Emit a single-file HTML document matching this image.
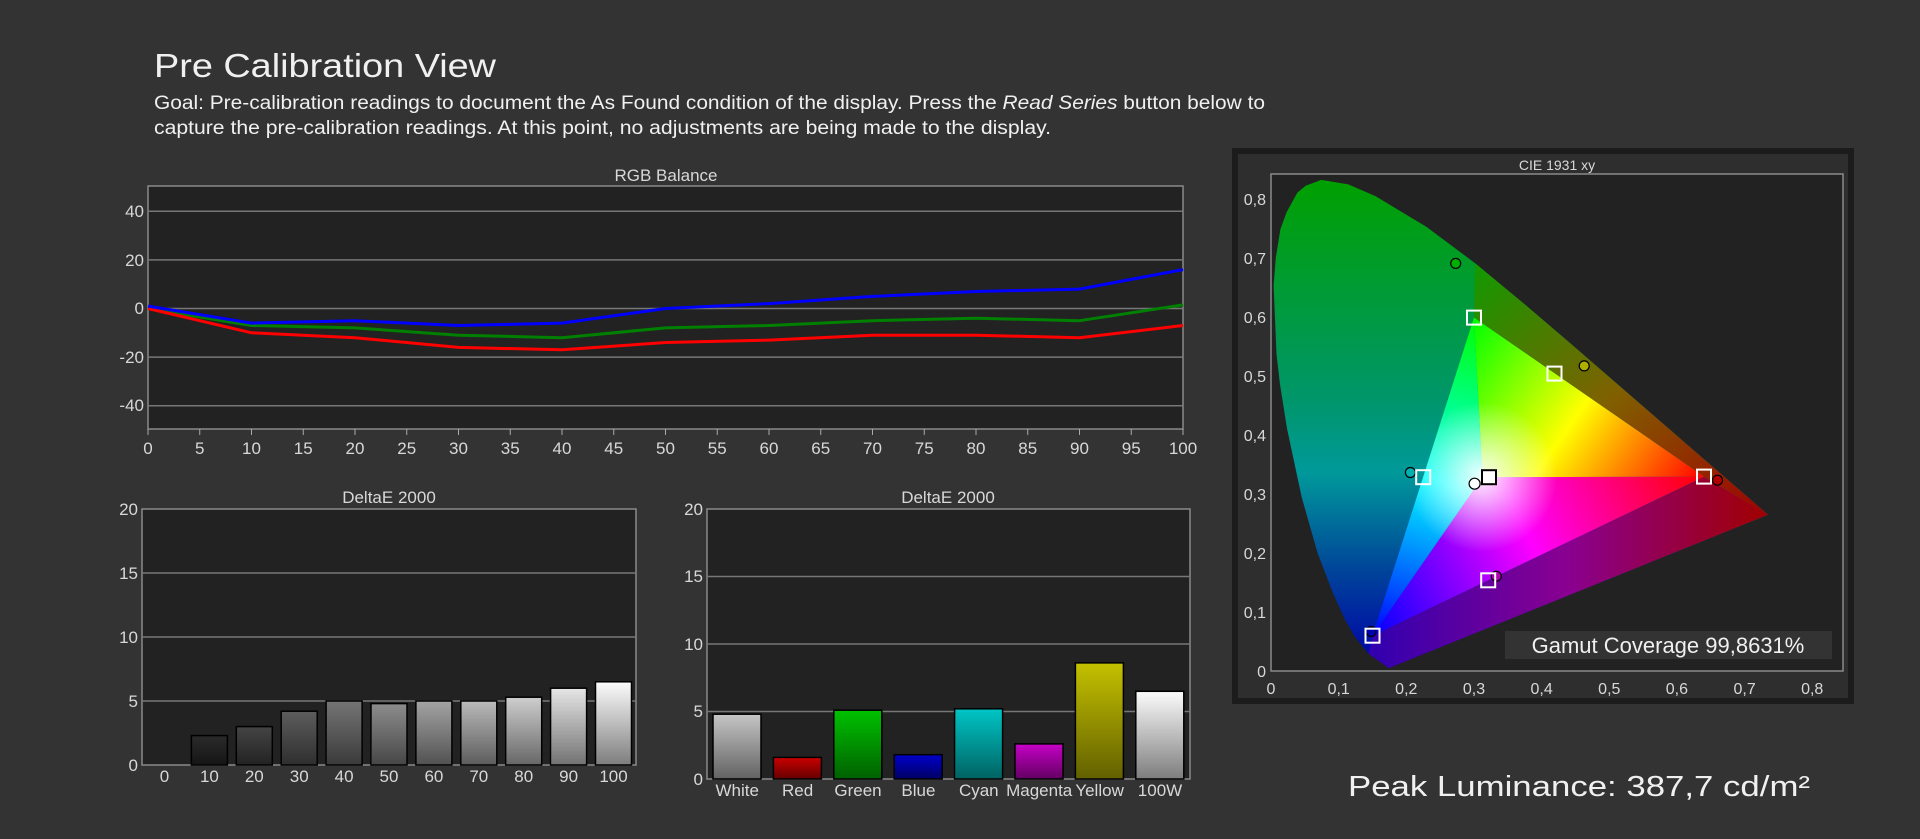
<!DOCTYPE html>
<html><head><meta charset="utf-8"><style>
html,body{margin:0;padding:0;background:#333;width:1920px;height:839px;overflow:hidden}
svg{display:block}
.n{font-family:"Liberation Sans Narrow","Liberation Sans",sans-serif;fill:#d8d8d8;font-size:17px}
.s{font-family:"Liberation Sans","DejaVu Sans",sans-serif}
</style></head><body>
<svg width="1920" height="839" viewBox="0 0 1920 839" xmlns="http://www.w3.org/2000/svg">
<defs>
<linearGradient id="loc" x1="0" y1="0" x2="0" y2="1">
<stop offset="0" stop-color="#00a000"/><stop offset="0.45" stop-color="#00966a"/><stop offset="0.6" stop-color="#00999a"/><stop offset="0.8" stop-color="#004499"/><stop offset="1" stop-color="#0000aa"/></linearGradient>
<linearGradient id="bot" x1="0" y1="0" x2="1" y2="0"><stop offset="0" stop-color="#3000b0"/><stop offset="0.5" stop-color="#8a0090"/><stop offset="1" stop-color="#a00000"/></linearGradient>
<linearGradient id="top" x1="0" y1="0" x2="1" y2="1"><stop offset="0" stop-color="#109a00"/><stop offset="0.5" stop-color="#806000"/><stop offset="1" stop-color="#a00000"/></linearGradient>
<linearGradient id="rg" gradientUnits="userSpaceOnUse" x1="1704" y1="477" x2="1474" y2="318"><stop offset="0" stop-color="#ff0000"/><stop offset="0.5" stop-color="#ffff00"/><stop offset="1" stop-color="#00ff00"/></linearGradient>
<linearGradient id="gb" gradientUnits="userSpaceOnUse" x1="1474" y1="318" x2="1372" y2="636"><stop offset="0" stop-color="#00ff00"/><stop offset="0.5" stop-color="#00ffff"/><stop offset="1" stop-color="#0000ff"/></linearGradient>
<linearGradient id="br" gradientUnits="userSpaceOnUse" x1="1372" y1="636" x2="1704" y2="477"><stop offset="0" stop-color="#0000ff"/><stop offset="0.5" stop-color="#ff00ff"/><stop offset="1" stop-color="#ff0000"/></linearGradient>
<radialGradient id="wh" gradientUnits="userSpaceOnUse" cx="1482" cy="477" r="75"><stop offset="0" stop-color="#fff" stop-opacity="0.95"/><stop offset="1" stop-color="#fff" stop-opacity="0"/></radialGradient>
<linearGradient id="g0" x1="0" y1="0" x2="0" y2="1"><stop offset="0" stop-color="#000" stop-opacity="0"/><stop offset="1" stop-color="#000" stop-opacity="0.5"/></linearGradient>
</defs>

<text x="154" y="77" class="s" font-size="33" fill="#f0f0f0" textLength="342" lengthAdjust="spacingAndGlyphs">Pre Calibration View</text>
<text x="154" y="109" class="s" font-size="19" fill="#f0f0f0" textLength="1111" lengthAdjust="spacingAndGlyphs">Goal: Pre-calibration readings to document the As Found condition of the display. Press the <tspan font-style="italic">Read Series</tspan> button below to</text>
<text x="154" y="134" class="s" font-size="19" fill="#f0f0f0" textLength="897" lengthAdjust="spacingAndGlyphs">capture the pre-calibration readings. At this point, no adjustments are being made to the display.</text>

<!-- RGB balance -->
<text x="666" y="181" class="n" text-anchor="middle" font-size="16">RGB Balance</text>
<rect x="148" y="186" width="1035" height="243" fill="#222" stroke="#8a8a8a" stroke-width="1.5"/>
<g stroke="#777" stroke-width="1.5">
<line x1="148" y1="211.3" x2="1183" y2="211.3"/><line x1="148" y1="259.9" x2="1183" y2="259.9"/><line x1="148" y1="308.5" x2="1183" y2="308.5"/><line x1="148" y1="357.1" x2="1183" y2="357.1"/><line x1="148" y1="405.7" x2="1183" y2="405.7"/>
</g>
<g class="n" text-anchor="end">
<text x="144" y="217">40</text><text x="144" y="266">20</text><text x="144" y="314">0</text><text x="144" y="363">-20</text><text x="144" y="411">-40</text></g>
<g stroke="#aaa" stroke-width="1">
<line x1="148" y1="429" x2="148" y2="435"/><line x1="199.75" y1="429" x2="199.75" y2="435"/><line x1="251.5" y1="429" x2="251.5" y2="435"/><line x1="303.25" y1="429" x2="303.25" y2="435"/><line x1="355" y1="429" x2="355" y2="435"/><line x1="406.75" y1="429" x2="406.75" y2="435"/><line x1="458.5" y1="429" x2="458.5" y2="435"/><line x1="510.25" y1="429" x2="510.25" y2="435"/><line x1="562" y1="429" x2="562" y2="435"/><line x1="613.75" y1="429" x2="613.75" y2="435"/><line x1="665.5" y1="429" x2="665.5" y2="435"/><line x1="717.25" y1="429" x2="717.25" y2="435"/><line x1="769" y1="429" x2="769" y2="435"/><line x1="820.75" y1="429" x2="820.75" y2="435"/><line x1="872.5" y1="429" x2="872.5" y2="435"/><line x1="924.25" y1="429" x2="924.25" y2="435"/><line x1="976" y1="429" x2="976" y2="435"/><line x1="1027.75" y1="429" x2="1027.75" y2="435"/><line x1="1079.5" y1="429" x2="1079.5" y2="435"/><line x1="1131.25" y1="429" x2="1131.25" y2="435"/><line x1="1183" y1="429" x2="1183" y2="435"/></g>
<g class="n" text-anchor="middle">
<text x="148" y="454">0</text><text x="199.75" y="454">5</text><text x="251.5" y="454">10</text><text x="303.25" y="454">15</text><text x="355" y="454">20</text><text x="406.75" y="454">25</text><text x="458.5" y="454">30</text><text x="510.25" y="454">35</text><text x="562" y="454">40</text><text x="613.75" y="454">45</text><text x="665.5" y="454">50</text><text x="717.25" y="454">55</text><text x="769" y="454">60</text><text x="820.75" y="454">65</text><text x="872.5" y="454">70</text><text x="924.25" y="454">75</text><text x="976" y="454">80</text><text x="1027.75" y="454">85</text><text x="1079.5" y="454">90</text><text x="1131.25" y="454">95</text><text x="1183" y="454">100</text></g>
<g fill="none" stroke-width="3" stroke-linejoin="round">
<polyline stroke="#008000" points="148,308.5 251.5,325.5 355,327.9 458.5,335.2 562,337.7 665.5,327.9 769,325.5 872.5,320.7 976,318.2 1079.5,320.7 1183,304.9"/>
<polyline stroke="#ff0000" points="148,308.5 251.5,332.8 355,337.7 458.5,347.4 562,349.8 665.5,342.5 769,340.1 872.5,335.2 976,335.2 1079.5,337.7 1183,325.5"/>
<polyline stroke="#0000ff" points="148,306.1 251.5,323.1 355,320.7 458.5,325.5 562,323.1 665.5,308.5 769,303.6 872.5,296.4 976,291.5 1079.5,289.1 1183,269.6"/>
</g>

<!-- DeltaE left -->
<text x="389" y="503" class="n" text-anchor="middle" font-size="16">DeltaE 2000</text>
<rect x="142" y="509" width="494" height="256" fill="#222" stroke="#8a8a8a" stroke-width="1.5"/>
<g stroke="#777" stroke-width="1.5"><line x1="142" y1="573" x2="636" y2="573"/><line x1="142" y1="637" x2="636" y2="637"/><line x1="142" y1="701" x2="636" y2="701"/></g>
<g class="n" text-anchor="end"><text x="138" y="515">20</text><text x="138" y="579">15</text><text x="138" y="643">10</text><text x="138" y="707">5</text><text x="138" y="771">0</text></g>
<g stroke="#000" stroke-width="1.5">
<rect x="191.4" y="735.6" width="36" height="29.4" fill="#2a2a2a"/>
<rect x="236.3" y="726.6" width="36" height="38.4" fill="#444"/>
<rect x="281.2" y="711.2" width="36" height="53.8" fill="#5c5c5c"/>
<rect x="326.1" y="701" width="36" height="64" fill="#747474"/>
<rect x="371" y="703.6" width="36" height="61.4" fill="#8c8c8c"/>
<rect x="415.9" y="701" width="36" height="64" fill="#a2a2a2"/>
<rect x="460.8" y="701" width="36" height="64" fill="#b8b8b8"/>
<rect x="505.7" y="697.2" width="36" height="67.8" fill="#cdcdcd"/>
<rect x="550.6" y="688.2" width="36" height="76.8" fill="#e4e4e4"/>
<rect x="595.5" y="681.8" width="36" height="83.2" fill="#fafafa"/>
</g>
<g fill="url(#g0)"><rect x="192" y="736" width="35" height="29"/><rect x="237" y="727" width="35" height="38"/><rect x="282" y="712" width="35" height="53"/><rect x="327" y="702" width="35" height="63"/><rect x="372" y="704" width="35" height="61"/><rect x="416.5" y="702" width="35" height="63"/><rect x="461.5" y="702" width="35" height="63"/><rect x="506.5" y="698" width="35" height="67"/><rect x="551.5" y="689" width="35" height="76"/><rect x="596" y="683" width="35" height="82"/></g>
<g class="n" text-anchor="middle"><text x="164.5" y="782">0</text><text x="209.4" y="782">10</text><text x="254.3" y="782">20</text><text x="299.2" y="782">30</text><text x="344.1" y="782">40</text><text x="389" y="782">50</text><text x="433.9" y="782">60</text><text x="478.8" y="782">70</text><text x="523.7" y="782">80</text><text x="568.6" y="782">90</text><text x="613.5" y="782">100</text></g>

<!-- DeltaE right -->
<text x="948" y="503" class="n" text-anchor="middle" font-size="16">DeltaE 2000</text>
<rect x="707" y="509" width="483" height="270" fill="#222" stroke="#8a8a8a" stroke-width="1.5"/>
<g stroke="#777" stroke-width="1.5"><line x1="707" y1="576.5" x2="1190" y2="576.5"/><line x1="707" y1="644" x2="1190" y2="644"/><line x1="707" y1="711.5" x2="1190" y2="711.5"/></g>
<g class="n" text-anchor="end"><text x="703" y="515">20</text><text x="703" y="582">15</text><text x="703" y="650">10</text><text x="703" y="717">5</text><text x="703" y="785">0</text></g>
<g stroke="#000" stroke-width="1.5">
<rect x="713" y="714.2" width="48" height="64.8" fill="#c4c4c4"/>
<rect x="773.4" y="757.4" width="48" height="21.6" fill="#c80000"/>
<rect x="833.8" y="710.2" width="48" height="68.8" fill="#00c000"/>
<rect x="894.2" y="754.7" width="48" height="24.3" fill="#0000c8"/>
<rect x="954.6" y="708.8" width="48" height="70.2" fill="#00c4c4"/>
<rect x="1015" y="743.9" width="48" height="35.1" fill="#c400c4"/>
<rect x="1075.4" y="662.9" width="48" height="116.1" fill="#c4c000"/>
<rect x="1135.8" y="691.3" width="48" height="87.7" fill="#fafafa"/>
</g>
<g fill="url(#g0)"><rect x="713.5" y="715" width="47" height="64"/><rect x="774" y="758" width="47" height="21"/><rect x="834.5" y="711" width="47" height="68"/><rect x="895" y="755.5" width="47" height="23.5"/><rect x="955.5" y="709.5" width="47" height="69.5"/><rect x="1015.5" y="744.5" width="47" height="34.5"/><rect x="1076" y="663.5" width="47" height="115.5"/><rect x="1136.5" y="692" width="47" height="87"/></g>
<g class="n" text-anchor="middle"><text x="737.2" y="796">White</text><text x="797.6" y="796">Red</text><text x="858" y="796">Green</text><text x="918.4" y="796">Blue</text><text x="978.8" y="796">Cyan</text><text x="1039.2" y="796">Magenta</text><text x="1099.6" y="796">Yellow</text><text x="1160" y="796">100W</text></g>

<!-- CIE -->
<rect x="1232" y="148" width="622" height="556" fill="#1c1c1c"/>
<rect x="1238" y="154" width="610" height="544" fill="#2e2e2e"/>
<text x="1557" y="170" class="s" font-size="14" fill="#d8d8d8" text-anchor="middle">CIE 1931 xy</text>
<rect x="1271" y="174" width="572" height="497" fill="#222" stroke="#8a8a8a" stroke-width="1.5"/>
<path fill="url(#loc)" d="M1388.8,668.1 L1368.4,653.5 L1355,637 L1345.1,619.9 L1332.8,592.8 L1317.5,552.8 L1301.7,497.2 L1286.9,428 L1279.9,383.6 L1276.5,353.9 L1273.6,285.3 L1275.8,257.9 L1280.4,229.2 L1286.6,212.2 L1297.3,192.7 L1305.6,185.7 L1321.3,179.9 L1348.3,184.4 L1375.7,196.3 L1426.3,226.7 L1475.1,263.2 L1523.4,303.2 L1571.4,344.3 L1617.7,384.4 L1660.1,421.1 L1695.2,451.6 L1738.8,489.4 L1768,514.7 Z"/>
<path fill="url(#bot)" d="M1388.8,668.1 L1368.4,653.5 L1372.5,635.7 L1704,476.6 L1768,514.7 Z"/>
<path fill="url(#top)" d="M1474,317.6 L1475.1,263.2 L1523.4,303.2 L1571.4,344.3 L1617.7,384.4 L1660.1,421.1 L1695.2,451.6 L1738.8,489.4 L1768,514.7 L1704,476.6 Z"/>
<path fill="url(#rg)" d="M1482.5,477.2 L1704,476.6 L1474,317.6 Z"/>
<path fill="url(#gb)" d="M1482.5,477.2 L1474,317.6 L1372.5,635.7 Z"/>
<path fill="url(#br)" d="M1482.5,477.2 L1372.5,635.7 L1704,476.6 Z"/>
<path fill="url(#wh)" d="M1704,476.6 L1474,317.6 L1372.5,635.7 Z"/>
<g class="s" font-size="16" fill="#d8d8d8" text-anchor="end">
<text x="1266" y="677">0</text><text x="1266" y="618">0,1</text><text x="1266" y="559">0,2</text><text x="1266" y="500">0,3</text><text x="1266" y="441">0,4</text><text x="1266" y="382">0,5</text><text x="1266" y="323">0,6</text><text x="1266" y="264">0,7</text><text x="1266" y="205">0,8</text></g>
<g class="s" font-size="16" fill="#d8d8d8" text-anchor="middle">
<text x="1271" y="694">0</text><text x="1338.7" y="694">0,1</text><text x="1406.3" y="694">0,2</text><text x="1474" y="694">0,3</text><text x="1541.6" y="694">0,4</text><text x="1609.3" y="694">0,5</text><text x="1676.9" y="694">0,6</text><text x="1744.6" y="694">0,7</text><text x="1812.2" y="694">0,8</text></g>
<g stroke="#000" stroke-width="1.2">
<circle cx="1455.7" cy="263.4" r="5" fill="#00b000"/>
<circle cx="1584.2" cy="365.9" r="5" fill="#b0b000"/>
<circle cx="1717.5" cy="480.2" r="5" fill="#b00000"/>
<circle cx="1410.4" cy="472.5" r="5" fill="#00b0b0"/>
<circle cx="1496.3" cy="576.2" r="5" fill="#b000b0"/>
<circle cx="1371.1" cy="631.5" r="5" fill="#0000b0"/>
<circle cx="1474.6" cy="483.7" r="5.5" fill="#fff"/>
</g>
<g fill="none" stroke="#fff" stroke-width="2">
<rect x="1697" y="469.6" width="14" height="14"/>
<rect x="1467" y="310.6" width="14" height="14"/>
<rect x="1365.5" y="628.7" width="14" height="14"/>
<rect x="1416.2" y="470.2" width="14" height="14"/>
<rect x="1481.2" y="573.3" width="14" height="14"/>
<rect x="1547.5" y="366.6" width="14" height="14"/>
<rect x="1482" y="470.2" width="14" height="14" stroke="#000" fill="#fff"/>
</g>
<rect x="1505" y="631" width="327" height="28" fill="#333"/>
<text x="1668" y="653" class="s" font-size="22" fill="#f0f0f0" text-anchor="middle">Gamut Coverage 99,8631%</text>

<text x="1348" y="796" class="s" font-size="29" fill="#f0f0f0" textLength="462" lengthAdjust="spacingAndGlyphs">Peak Luminance: 387,7 cd/m²</text>
</svg>
</body></html>
